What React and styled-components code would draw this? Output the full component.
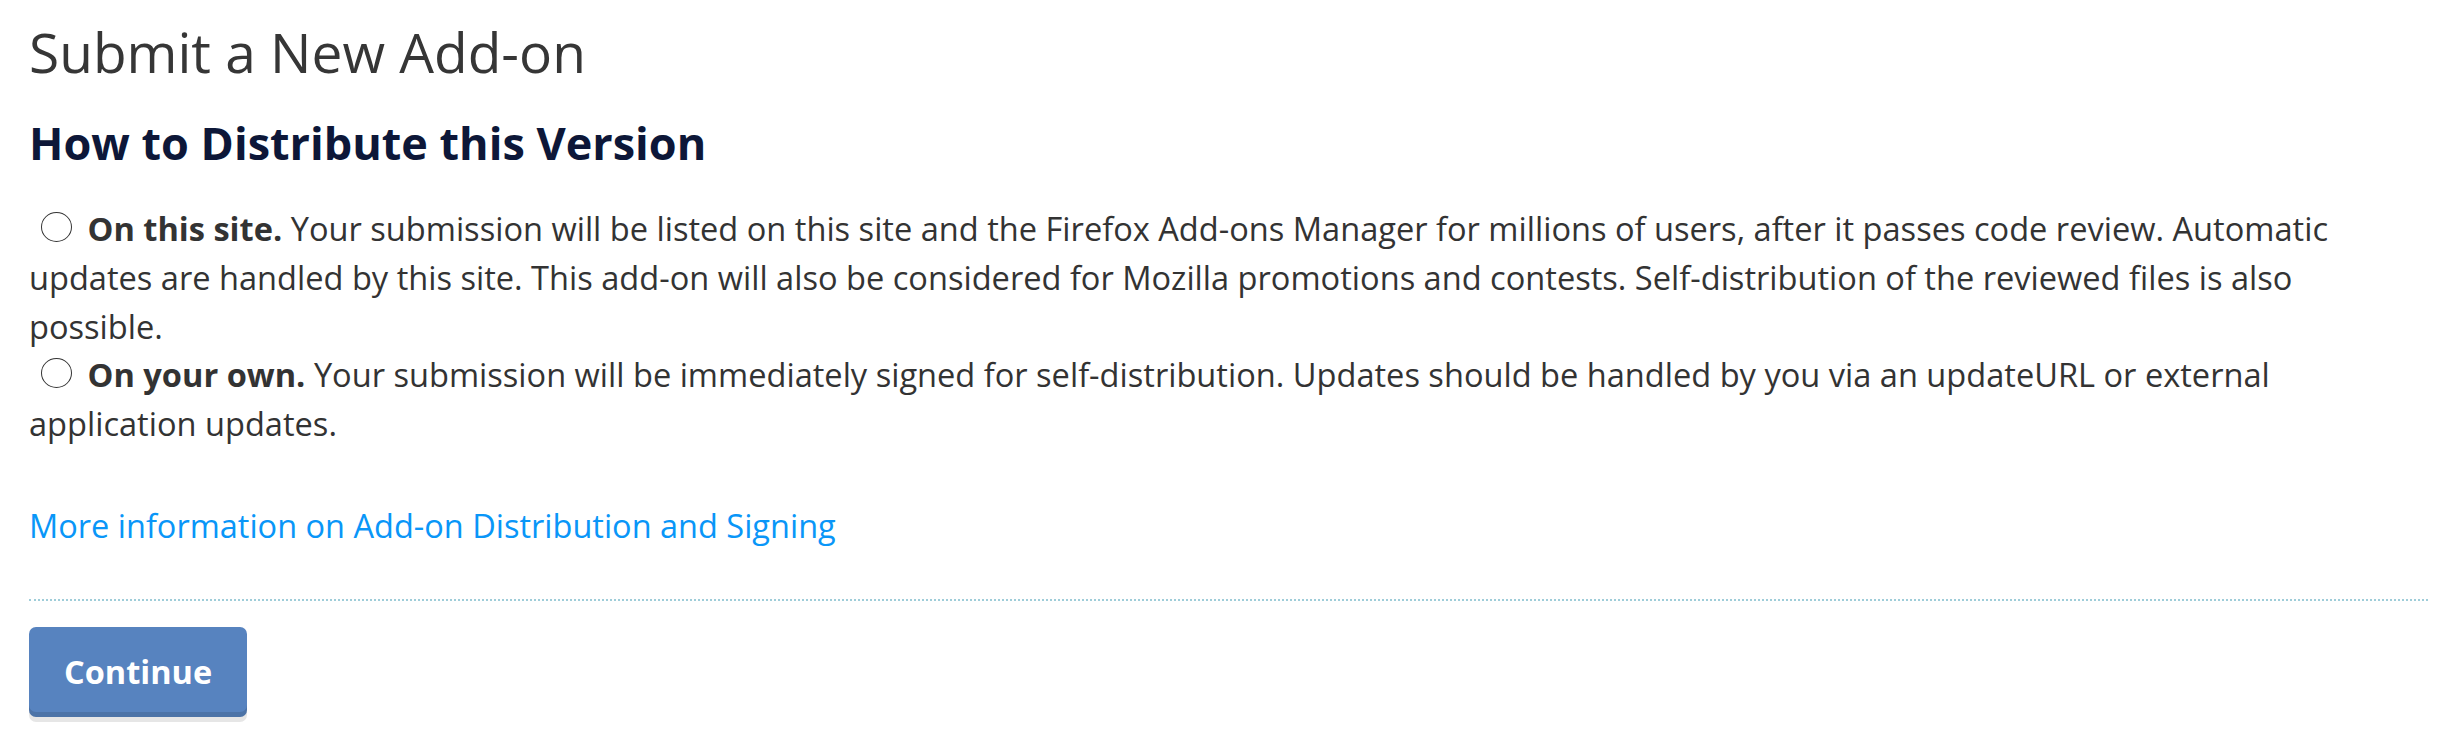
import styled, { createGlobalStyle } from "styled-components";

const GlobalStyle = createGlobalStyle`
    body {
        margin: 0;
        background: #fff;
        font-family: "Open Sans", "Noto Sans", sans-serif;
        color: #333;
    }
`;

const Page = styled.div`
    padding: 19px 17px 20px 29px;
`;

const Title = styled.h2`
    margin: 0;
    font-size: 55px;
    line-height: 66px;
    font-weight: 400;
    color: #363636;
`;

const Heading = styled.h3`
    margin: 31px 0 0;
    font-size: 45px;
    line-height: 54px;
    font-weight: 700;
    color: #0d1738;
`;

const Choices = styled.div`
    margin-top: 35px;
    font-size: 32.6px;
    line-height: 48.75px;
`;

const Choice = styled.label`
    display: block;

    strong {
        font-weight: 700;
    }
`;

const Radio = styled.input.attrs({ type: "radio" })`
    appearance: none;
    box-sizing: border-box;
    width: 31px;
    height: 30px;
    margin: 0 7px 0 12px;
    border: 1.6px solid #333;
    border-radius: 50%;
    background: #fff;
    vertical-align: baseline;
    position: relative;
    top: 1px;
`;

const InfoLink = styled.a`
    display: inline-block;
    margin-top: 53px;
    font-size: 32.5px;
    line-height: 48.75px;
    color: #0996f8;
    text-decoration: none;
`;

const Divider = styled.hr`
    margin: 48px 0 0;
    border: 0;
    border-top: 2.5px dotted #9fcdd9;
`;

const Button = styled.button`
    margin-top: 26px;
    padding: 21px 35px 21px;
    border: 0;
    border-radius: 7px;
    background: #5783bf;
    color: #fff;
    font-family: "Open Sans", "Noto Sans", sans-serif;
    font-size: 32.5px;
    line-height: 48.75px;
    font-weight: 700;
    box-shadow: inset 0 -5px 0 rgba(0, 0, 0, 0.12), 0 5px 0 #e6e6e6;
    cursor: pointer;
`;

const options = [
    {
        id: "listed",
        label: "On this site.",
        text: "Your submission will be listed on this site and the Firefox Add-ons Manager for millions of users, after it passes code review. Automatic updates are handled by this site. This add-on will also be considered for Mozilla promotions and contests. Self-distribution of the reviewed files is also possible.",
    },
    {
        id: "unlisted",
        label: "On your own.",
        text: "Your submission will be immediately signed for self-distribution. Updates should be handled by you via an updateURL or external application updates.",
    },
];

const App = () => {
    return (
        <>
            <GlobalStyle />
            <Page>
                <Title>Submit a New Add-on</Title>
                <Heading>How to Distribute this Version</Heading>
                <Choices>
                    {options.map((opt) => (
                        <Choice key={opt.id}>
                            <Radio name="channel" value={opt.id} />
                            {" "}
                            <strong>{opt.label}</strong> {opt.text}
                        </Choice>
                    ))}
                </Choices>
                <InfoLink href="#">More information on Add-on Distribution and Signing</InfoLink>
                <Divider />
                <Button>Continue</Button>
            </Page>
        </>
    );
};

export default App;
